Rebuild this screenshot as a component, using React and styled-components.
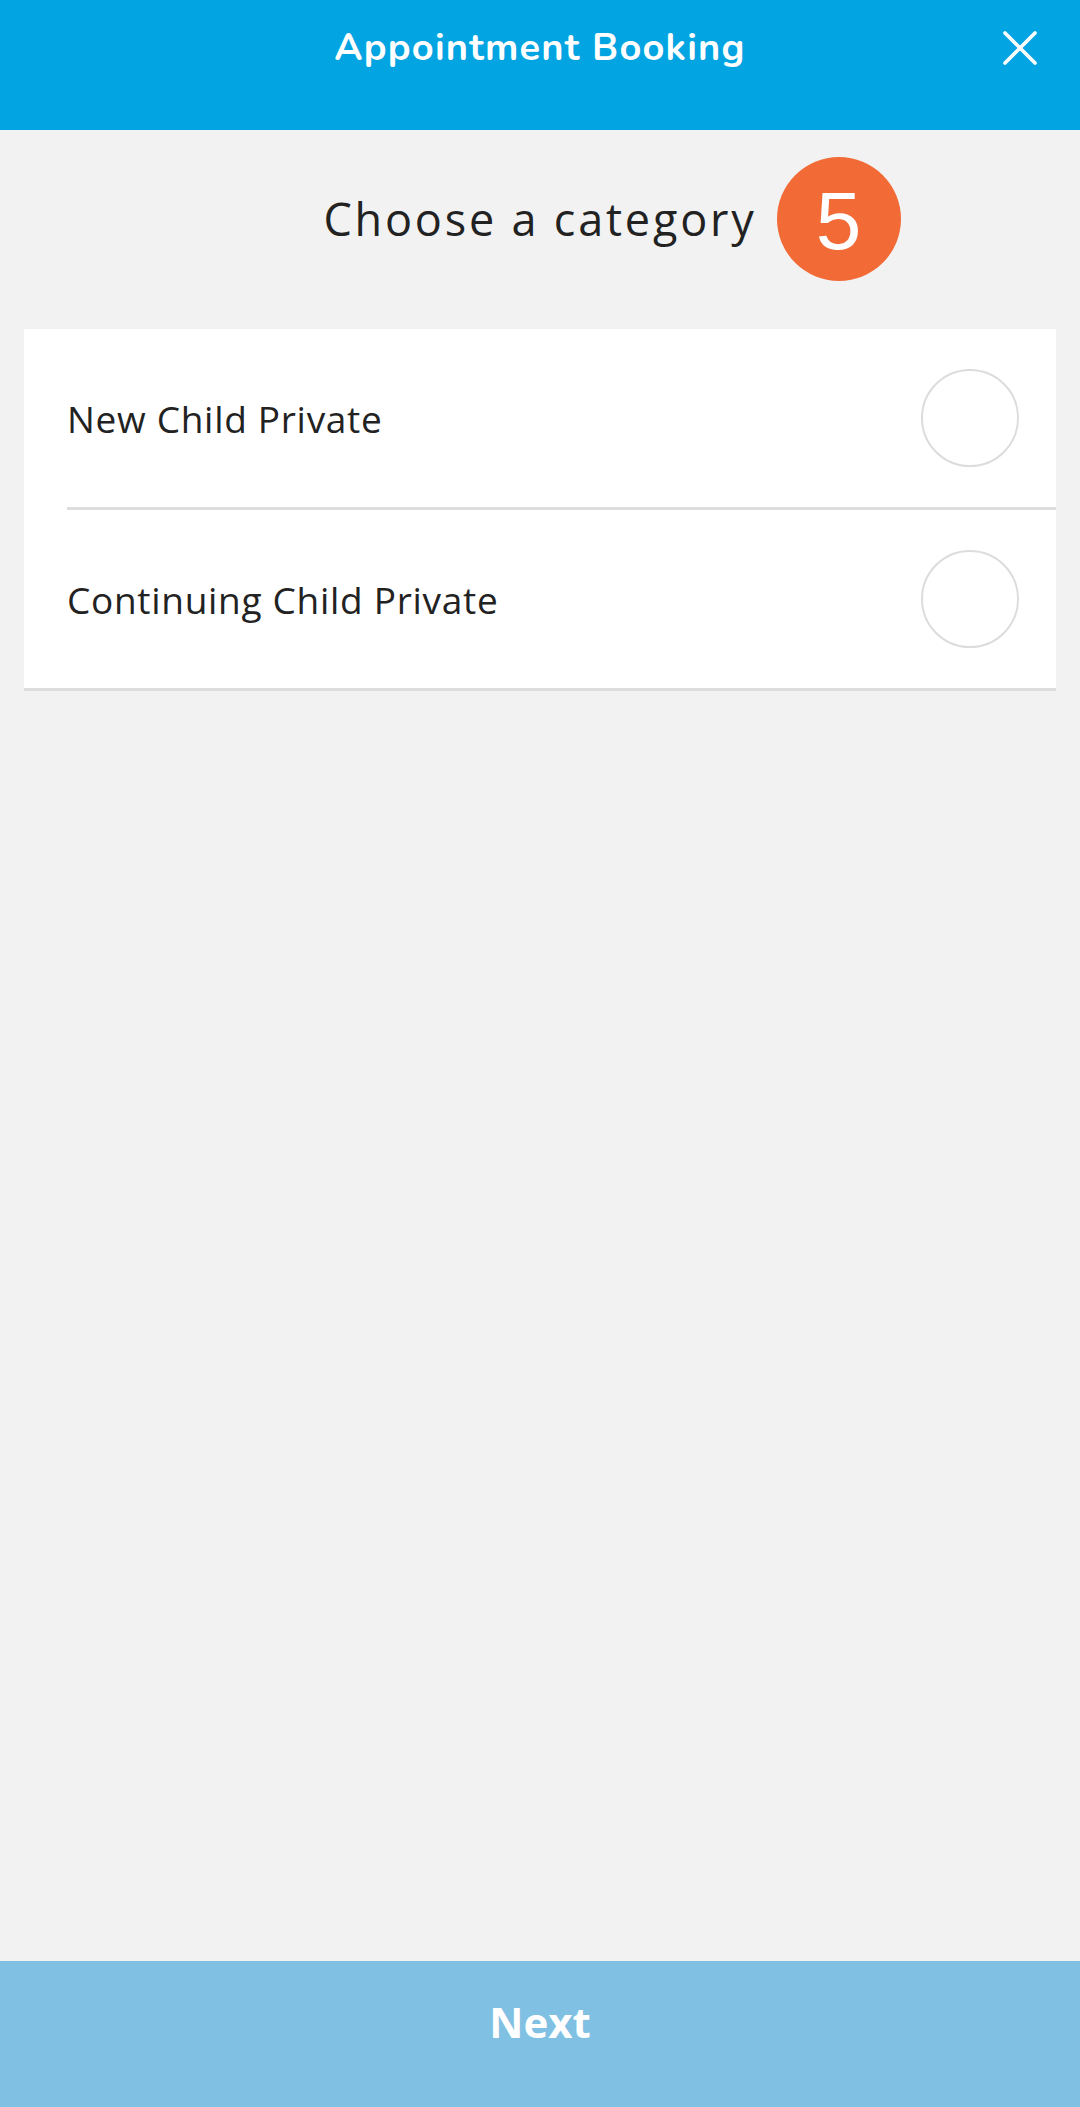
import React, { useState } from "react";
import styled, { createGlobalStyle } from "styled-components";

const GlobalStyle = createGlobalStyle`
  * { box-sizing: border-box; }
  html, body { margin: 0; padding: 0; background: #f2f2f2; }
  body { font-family: "Open Sans", "Liberation Sans", sans-serif; color: #222; }
`;

const categories = ["New Child Private", "Continuing Child Private"];

const App = () => {
  const [selected, setSelected] = useState(null);

  return (
    <Screen>
      <GlobalStyle />
      <Header>
        <HeaderTitle>Appointment Booking</HeaderTitle>
        <CloseButton aria-label="close">
          <svg width="34" height="34" viewBox="0 0 34 34">
            <path
              d="M2 2 L32 32 M32 2 L2 32"
              stroke="#fff"
              strokeWidth="3.6"
              strokeLinecap="round"
            />
          </svg>
        </CloseButton>
      </Header>

      <Content>
        <TitleRow>
          <Title>
            Choose a category
            <StepBadge>5</StepBadge>
          </Title>
        </TitleRow>

        <Card>
          {categories.map((name, i) => (
            <Row key={name} onClick={() => setSelected(i)}>
              <RowInner $last={i === categories.length - 1}>
                <Label>{name}</Label>
                <Radio $checked={selected === i} />
              </RowInner>
            </Row>
          ))}
        </Card>
      </Content>

      <NextButton disabled={selected === null}>Next</NextButton>
    </Screen>
  );
};

const Screen = styled.div`
  display: flex;
  flex-direction: column;
  min-height: 100vh;
`;

const Header = styled.header`
  position: relative;
  height: 130px;
  background: #03a4e2;
  display: flex;
  justify-content: center;
  padding-top: 21px;
`;

const HeaderTitle = styled.h1`
  margin: 0;
  font-family: "Nunito", "Lato", sans-serif;
  font-weight: 700;
  font-size: 38px;
  line-height: 54px;
  color: #fff;
  letter-spacing: 1.2px;
`;

const CloseButton = styled.button`
  position: absolute;
  top: 31px;
  right: 43px;
  padding: 0;
  border: 0;
  background: none;
  display: flex;
`;

const Content = styled.main`
  flex: 1;
`;

const TitleRow = styled.div`
  height: 199px;
  padding-bottom: 21px;
  display: flex;
  align-items: center;
  justify-content: center;
`;

const Title = styled.h2`
  position: relative;
  margin: 0;
  font-family: "Open Sans", sans-serif;
  font-weight: 400;
  font-size: 45px;
  line-height: 60px;
  letter-spacing: 2.8px;
  color: #222;
`;

const StepBadge = styled.span`
  position: absolute;
  left: calc(100% + 20px);
  top: 50%;
  transform: translateY(-50%);
  width: 124px;
  height: 124px;
  border-radius: 50%;
  background: #f26a36;
  color: #fff;
  display: flex;
  align-items: center;
  justify-content: center;
  font-family: "Liberation Sans", Arial, sans-serif;
  font-size: 82px;
  letter-spacing: 0;
  padding-top: 4px;
`;

const Card = styled.section`
  margin: 0 24px;
  background: #fff;
  border-bottom: 3px solid #dddddd;
`;

const Row = styled.div`
  padding-left: 43px;
  cursor: pointer;
`;

const RowInner = styled.div`
  height: ${(p) => (p.$last ? "178px" : "181px")};
  padding-right: 37px;
  display: flex;
  align-items: center;
  justify-content: space-between;
  border-bottom: ${(p) => (p.$last ? "none" : "3px solid #dddddd")};
`;

const Label = styled.span`
  font-family: "Open Sans", sans-serif;
  font-size: 37px;
  letter-spacing: 0.7px;
  color: #222;
`;

const Radio = styled.span`
  width: 98px;
  height: 98px;
  border-radius: 50%;
  border: 2.5px solid ${(p) => (p.$checked ? "#03a4e2" : "#dcdcdc")};
  background: ${(p) => (p.$checked ? "#03a4e2" : "transparent")};
`;

const NextButton = styled.button`
  height: 146px;
  border: 0;
  background: #80c0e3;
  color: #fff;
  font-family: "Open Sans", sans-serif;
  font-weight: 700;
  font-size: 42px;
  padding-bottom: 26px;
`;

export default App;
